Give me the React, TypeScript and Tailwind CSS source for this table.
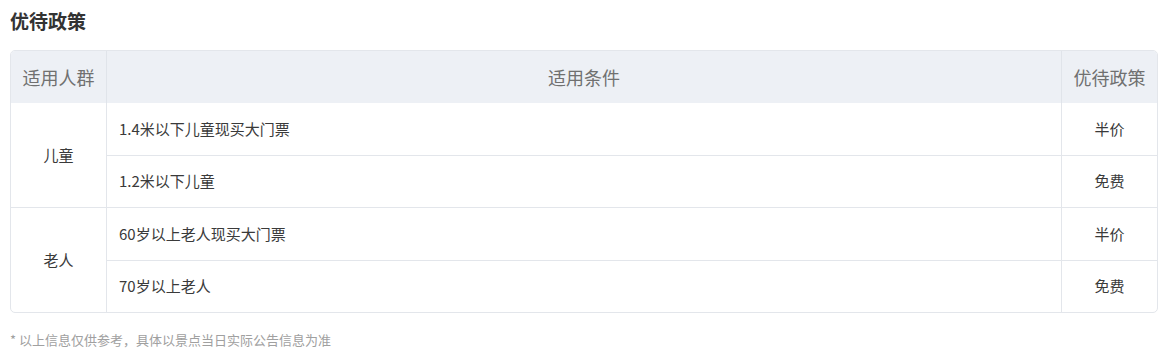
const groups = [
  {
    name: "儿童",
    rows: [
      { cond: "1.4米以下儿童现买大门票", policy: "半价" },
      { cond: "1.2米以下儿童", policy: "免费" },
    ],
  },
  {
    name: "老人",
    rows: [
      { cond: "60岁以上老人现买大门票", policy: "半价" },
      { cond: "70岁以上老人", policy: "免费" },
    ],
  },
];

const font = { fontFamily: '"Noto Sans CJK SC", "Noto Sans", sans-serif' };

export default function App() {
  return (
    <div className="w-[1165px] h-[354px] bg-white pl-[10px] pt-[8px]" style={font}>
      <h2 className="text-[19px] leading-[26px] font-bold text-[#333]">优待政策</h2>

      <div className="mt-[16px] w-[1148px] border border-[#e3e6eb] rounded-[5px] overflow-hidden">
        <div className="grid grid-cols-[96px_1fr_95px] h-[52px] bg-[#edf0f5] text-[18px] text-[#707070]">
          <div className="flex items-center justify-center border-r border-[#e0e4ea]">适用人群</div>
          <div className="flex items-center justify-center border-r border-[#e0e4ea]">适用条件</div>
          <div className="flex items-center justify-center">优待政策</div>
        </div>

        {groups.map((g, gi) => (
          <div
            key={g.name}
            className={
              "grid grid-cols-[96px_1fr] text-[15px] text-[#3a3a3a] " +
              (gi > 0 ? "border-t border-[#e3e6eb]" : "")
            }
          >
            <div className="flex items-center justify-center border-r border-[#e3e6eb]">{g.name}</div>
            <div>
              {g.rows.map((r, ri) => (
                <div
                  key={r.cond}
                  className={
                    "grid grid-cols-[1fr_95px] h-[52px] " +
                    (ri > 0 ? "border-t border-[#e3e6eb]" : "")
                  }
                >
                  <div className="flex items-center pl-[12px] border-r border-[#e3e6eb]">{r.cond}</div>
                  <div className="flex items-center justify-center">{r.policy}</div>
                </div>
              ))}
            </div>
          </div>
        ))}
      </div>

      <p className="mt-[18px] text-[13px] leading-[18px] text-[#a0a0a0]">
        * 以上信息仅供参考，具体以景点当日实际公告信息为准
      </p>
    </div>
  );
}
